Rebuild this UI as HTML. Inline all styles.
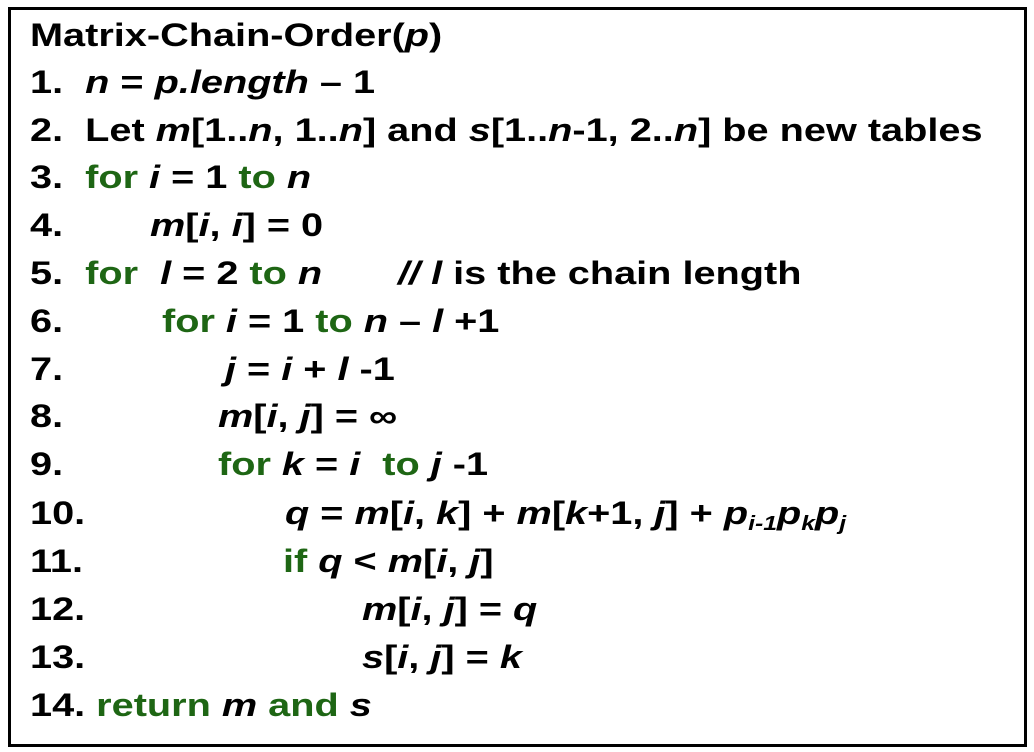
<!DOCTYPE html>
<html><head><meta charset="utf-8"><style>
body{margin:0;background:#fff;width:1034px;height:752px;overflow:hidden;position:relative;font-family:"Liberation Sans",Arial,sans-serif;font-weight:bold;font-size:32px;color:#000}
.box{position:absolute;left:8px;top:7px;width:1013px;height:734px;border:3px solid #000}
.l,.a{position:absolute;white-space:pre;line-height:36px;transform:scaleX(1.24);transform-origin:0 0}
.l{left:30px}
.g{color:#1e6614}
i{font-style:italic}
sub{font-size:20px;vertical-align:-6px;line-height:0}
</style></head><body>
<div class="box"></div>
<div class="l" style="top:17px">Matrix-Chain-Order(<i>p</i>)</div>
<div class="l" style="top:64px">1.  <i>n</i> = <i>p.length</i> – 1</div>
<div class="l" style="top:112px">2.  Let <i>m</i>[1..<i>n</i>, 1..<i>n</i>] and <i>s</i>[1..<i>n</i>-1, 2..<i>n</i>] be new tables</div>
<div class="l" style="top:159px">3.  <span class="g">for</span> <i>i</i> = 1 <span class="g">to</span> <i>n</i></div>
<div class="l" style="top:207px">4.</div><div class="a" style="top:207px;left:150px"><i>m</i>[<i>i</i>, <i>i</i>] = 0</div>
<div class="l" style="top:255px">5.  <span class="g">for</span>  <i>l</i> = 2 <span class="g">to</span> <i>n</i></div><div class="a" style="top:255px;left:398px"><i>// l</i> is the chain length</div>
<div class="l" style="top:303px">6.</div><div class="a" style="top:303px;left:162px"><span class="g">for</span> <i>i</i> = 1 <span class="g">to</span> <i>n</i> – <i>l</i> +1</div>
<div class="l" style="top:351px">7.</div><div class="a" style="top:351px;left:225px"><i>j</i> = <i>i</i> + <i>l</i> -1</div>
<div class="l" style="top:398px">8.</div><div class="a" style="top:398px;left:218px"><i>m</i>[<i>i</i>, <i>j</i>] = ∞</div>
<div class="l" style="top:446px">9.</div><div class="a" style="top:446px;left:218px"><span class="g">for</span> <i>k</i> = <i>i</i>  <span class="g">to</span> <i>j</i> -1</div>
<div class="l" style="top:495px">10.</div><div class="a" style="top:495px;left:285px"><i>q</i> = <i>m</i>[<i>i</i>, <i>k</i>] + <i>m</i>[<i>k</i>+1, <i>j</i>] + <i>p<sub>i-1</sub>p<sub>k</sub>p<sub>j</sub></i></div>
<div class="l" style="top:543px">11.</div><div class="a" style="top:543px;left:283px"><span class="g">if</span> <i>q</i> &lt; <i>m</i>[<i>i</i>, <i>j</i>]</div>
<div class="l" style="top:591px">12.</div><div class="a" style="top:591px;left:362px"><i>m</i>[<i>i</i>, <i>j</i>] = <i>q</i></div>
<div class="l" style="top:639px">13.</div><div class="a" style="top:639px;left:362px"><i>s</i>[<i>i</i>, <i>j</i>] = <i>k</i></div>
<div class="l" style="top:687px">14. <span class="g">return</span> <i>m</i> <span class="g">and</span> <i>s</i></div>
</body></html>
